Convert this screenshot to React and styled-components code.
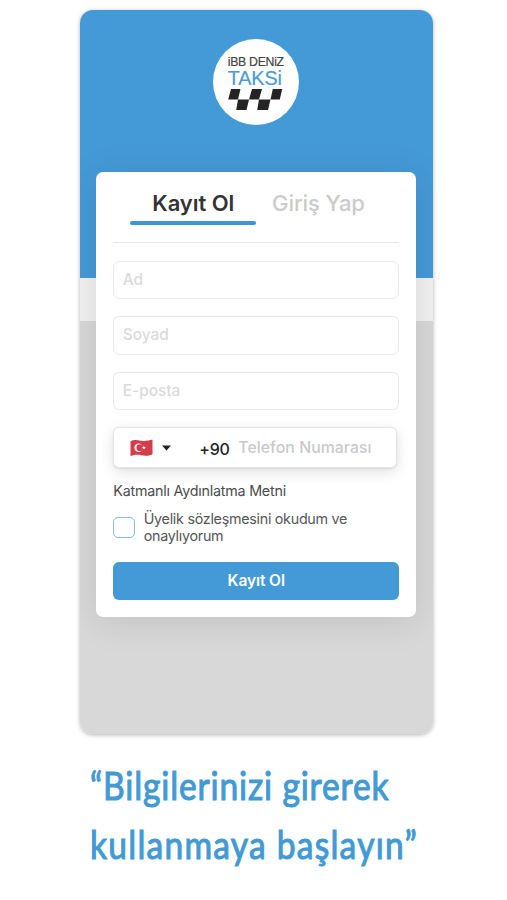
import React from "react";
import styled, { createGlobalStyle } from "styled-components";

const GlobalStyle = createGlobalStyle`
  * { box-sizing: border-box; }
  body { margin: 0; background: #fff; font-family: Inter, "Liberation Sans", sans-serif; }
`;

const Page = styled.main`
  width: 507px;
  height: 900px;
  padding: 10px 0 0 79.5px;
  overflow: hidden;
  background: #fff;
`;

const Phone = styled.section`
  width: 353.5px;
  height: 724px;
  padding-top: 29px;
  display: flex;
  flex-direction: column;
  align-items: center;
  border-radius: 13px;
  overflow: hidden;
  background: linear-gradient(#449ad7 0 268px, #f1f1f1 268px 311px, #d8d8d8 311px);
  box-shadow: 0 1px 4px rgba(0, 0, 0, 0.3);
`;

const Logo = styled.div`
  width: 86px;
  height: 86px;
  flex: none;
  border-radius: 50%;
  background: #fff;
  display: flex;
  flex-direction: column;
  align-items: flex-start;
  padding: 16px 0 0 14.5px;
`;

const LogoLine = styled.span`
  font-family: "Liberation Sans", Arial, sans-serif;
  white-space: nowrap;
  font-size: ${(p) => p.$size}px;
  line-height: ${(p) => p.$height}px;
  letter-spacing: ${(p) => p.$spacing}px;
  color: ${(p) => p.$color};
  -webkit-text-stroke: 0.2px ${(p) => p.$color};
`;

const Checker = styled.svg`
  display: block;
  margin: 2px 0 0 0.5px;
`;

const Card = styled.form`
  width: 320px;
  height: 445px;
  flex: none;
  margin-top: 47px;
  padding: 0 17px;
  border-radius: 7px;
  background: #fff;
  box-shadow: 0 4px 36px rgba(0, 0, 0, 0.11);
`;

const Tabs = styled.div`
  height: 71px;
  padding: 17px 17px 0;
  display: flex;
  border-bottom: 1.5px solid #e8e8e8;
`;

const Tab = styled.div`
  width: 126px;
  height: 36px;
  font-size: 22px;
  line-height: 28px;
  font-weight: ${(p) => (p.$active ? 600 : 500)};
  letter-spacing: ${(p) => (p.$active ? -0.05 : -0.1)}px;
  text-align: center;
  white-space: nowrap;
  text-indent: ${(p) => (p.$active ? 0 : -1.5)}px;
  color: ${(p) => (p.$active ? "#333335" : "#cbcbcb")};
`;

const Underline = styled.div`
  height: 4px;
  margin-top: 4px;
  border-radius: 2px;
  background: #3d96d3;
`;

const Fields = styled.div`
  padding-top: 17.5px;
  display: flex;
  flex-direction: column;
  gap: 17px;
`;

const Input = styled.div`
  height: 38.5px;
  padding-left: 8.5px;
  border: 1.3px solid #e9e9e9;
  border-radius: 6px;
  font-size: 15.4px;
  font-weight: 500;
  line-height: 36.5px;
  color: #dadada;
`;

const PhoneInput = styled.div`
  width: 284px;
  height: 41px;
  padding-left: 16px;
  display: flex;
  align-items: center;
  border: 1px solid #e4e4e4;
  border-radius: 6px;
  background: #fff;
  box-shadow: 0 4px 14px rgba(0, 0, 0, 0.12), 0 1px 2px rgba(0, 0, 0, 0.08);
`;

const Caret = styled.svg`
  margin-left: 9px;
`;

const DialCode = styled.span`
  width: 39px;
  margin-left: 28px;
  padding-top: 3px;
  font-size: 16px;
  font-weight: 500;
  letter-spacing: -0.3px;
  color: #242424;
`;

const PhonePlaceholder = styled.span`
  font-size: 15.8px;
  font-weight: 500;
  line-height: 18px;
  letter-spacing: 0.06px;
  white-space: nowrap;
  color: #c9c9cb;
`;

const Notice = styled.div`
  margin-top: 14px;
  font-size: 14.3px;
  line-height: 18px;
  letter-spacing: -0.22px;
  color: #4b4b4d;
`;

const Consent = styled.label`
  margin-top: 10px;
  display: flex;
  gap: 9px;
  font-size: 14.3px;
  line-height: 17px;
  letter-spacing: -0.27px;
  color: #56565a;
`;

const Checkbox = styled.span`
  width: 21.5px;
  height: 21.5px;
  margin-top: 6.5px;
  border: 1.5px solid #85bce3;
  border-radius: 5px;
`;

const Submit = styled.button`
  display: block;
  width: 100%;
  height: 38.5px;
  margin-top: 17.5px;
  padding: 0;
  border: 0;
  border-radius: 6px;
  background: #449ad7;
  color: #fff;
  font: 600 15.5px/38px Inter, sans-serif;
  letter-spacing: -0.1px;
`;

const Caption = styled.div`
  padding: 22px 0 0 10.5px;
  font-family: Lato, sans-serif;
  font-size: 39px;
  line-height: 59px;
  font-weight: 400;
  color: #429ad5;
  -webkit-text-stroke: 1.1px #429ad5;
  stroke-linejoin: round;
`;

const CaptionLine = styled.div`
  width: max-content;
  white-space: nowrap;
  letter-spacing: ${(p) => p.$spacing}px;
  transform: scaleX(0.86);
  transform-origin: left;
`;

const Flag = () => (
  <svg width="23" height="18" viewBox="0 0 23 18">
    <path d="M0.5 2.2C4 .2 7 1 11 1.7C15 2.4 19 1.6 22.5.5V15.2C19 16.9 15 17 11 16.2C7 15.4 4 15.8.5 17.2Z" fill="#d43e4a" />
    <circle cx="8.6" cy="8.8" r="4.2" fill="#fff" />
    <circle cx="9.8" cy="8.7" r="3.4" fill="#d43e4a" />
    <path d="m13.9 6.5.5 1.5 1.6-.1-1.3 1 .6 1.5-1.4-.9-1.3 1 .5-1.6-1.3-.9h1.6Z" fill="#fff" />
  </svg>
);

export default function App() {
  return (
    <>
      <GlobalStyle />
      <Page>
        <Phone>
          <Logo>
            <LogoLine $size={12.3} $height={14} $spacing={-0.3} $color="#444">iBB DENiZ</LogoLine>
            <LogoLine $size={19.8} $height={18} $spacing={-0.1} $color="#4a9bd3">TAKSi</LogoLine>
            <Checker width="56" height="23" viewBox="0 0 56 23" fill="#242424">
              <path d="M3 0H12.5L10 10.5H.2ZM10 10.5H21L18.5 21H8.2ZM24 0H34L31 10.5H21ZM31 10.5H42.5L40 21H29.2ZM44.8 0H54.2L51.8 10.5H42.5Z" />
            </Checker>
          </Logo>
          <Card>
            <Tabs>
              <Tab $active>
                Kayıt Ol
                <Underline />
              </Tab>
              <Tab>Giriş Yap</Tab>
            </Tabs>
            <Fields>
              <Input>Ad</Input>
              <Input>Soyad</Input>
              <Input>E-posta</Input>
              <PhoneInput>
                <Flag />
                <Caret width="9" height="6" viewBox="0 0 9 6">
                  <path d="M0 .5H9L4.5 5.5Z" fill="#222" />
                </Caret>
                <DialCode>+90</DialCode>
                <PhonePlaceholder>Telefon Numarası</PhonePlaceholder>
              </PhoneInput>
            </Fields>
            <Notice>Katmanlı Aydınlatma Metni</Notice>
            <Consent>
              <Checkbox />
              <span>
                Üyelik sözleşmesini okudum ve
                <br />
                onaylıyorum
              </span>
            </Consent>
            <Submit type="button">Kayıt Ol</Submit>
          </Card>
        </Phone>
        <Caption>
          <CaptionLine $spacing={1}>“Bilgilerinizi girerek</CaptionLine>
          <CaptionLine $spacing={1.45}>kullanmaya başlayın”</CaptionLine>
        </Caption>
      </Page>
    </>
  );
}
